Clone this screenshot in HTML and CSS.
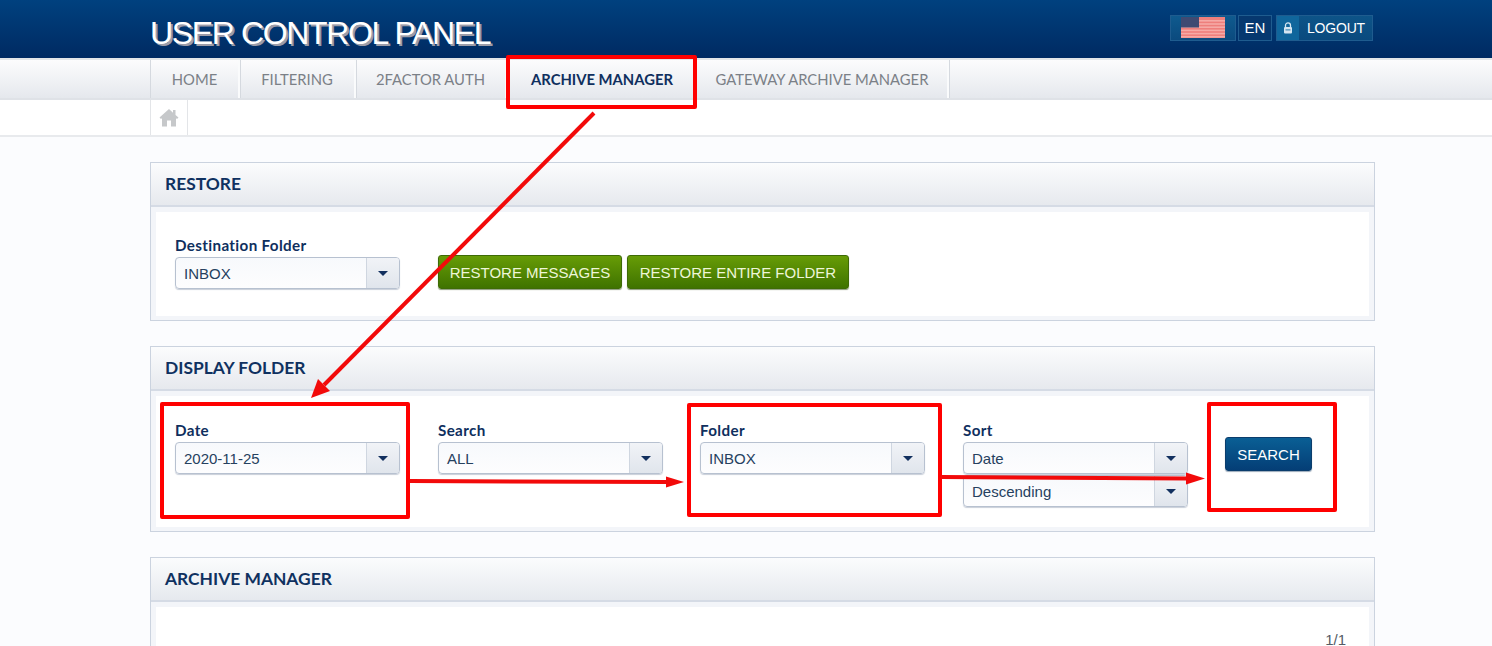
FILE: index.html
```html
<!DOCTYPE html>
<html lang="en">
<head>
<meta charset="utf-8">
<title>User Control Panel</title>
<link rel="stylesheet" href="styles.css">
</head>
<body>
<header class="topbar">
  <div class="wrap topbar-inner">
    <h1 class="brand">USER CONTROL PANEL</h1>
    <div class="tools">
      <div class="tool tool-flag">
        <svg class="flag" width="44" height="21" viewBox="0 0 44 21">
          <rect width="44" height="21" fill="#ee7f7c"/>
          <g fill="#f5aaa6"><rect y="3" width="44" height="1.6"/><rect y="6.2" width="44" height="1.6"/><rect y="9.4" width="44" height="1.6"/><rect y="12.6" width="44" height="1.6"/><rect y="15.8" width="44" height="1.6"/><rect y="19" width="44" height="1.6"/></g>
          <rect width="18" height="10.5" fill="#3f4a72"/>
        </svg>
      </div>
      <div class="tool tool-lang">EN</div>
      <div class="tool tool-logout">
        <span class="lock">
          <svg width="10" height="12" viewBox="0 0 10 12"><path d="M2.5 5V3.4a2.5 2.5 0 0 1 5 0V5" fill="none" stroke="#d5e6f2" stroke-width="1.3"/><rect x="1" y="5" width="8" height="6.5" rx="1" fill="#d5e6f2"/><rect x="2.5" y="7.4" width="5" height="1" fill="#2a7cab"/></svg>
        </span>
        <span class="logout-text">LOGOUT</span>
      </div>
    </div>
  </div>
</header>

<nav class="mainnav">
  <div class="wrap tabs">
    <a class="tab tab-home">HOME</a>
    <a class="tab tab-filter">FILTERING</a>
    <a class="tab tab-auth">2FACTOR AUTH</a>
    <a class="tab tab-archive active">ARCHIVE MANAGER</a>
    <a class="tab tab-gateway">GATEWAY ARCHIVE MANAGER</a>
  </div>
</nav>

<div class="crumbs">
  <div class="wrap">
    <span class="crumb-home">
      <svg width="20" height="19" viewBox="0 0 20 19"><path d="M10 1 0.5 9.6 2 11 3 10.2V18.5H8V12.5H12V18.5H17V10.2L18 11 19.5 9.6 16.5 6.9V2H14V4.7Z" fill="#c6c8ca"/></svg>
    </span>
  </div>
</div>

<main class="wrap content">
  <section class="panel">
    <h2 class="panel-title">RESTORE</h2>
    <div class="panel-outer">
      <div class="panel-body restore-body">
        <div class="field">
          <label class="field-label">Destination Folder</label>
          <div class="select"><span class="select-value">INBOX</span><span class="select-btn"><i class="caret"></i></span></div>
        </div>
        <div class="restore-actions">
          <button class="btn btn-green btn-msg">RESTORE MESSAGES</button>
          <button class="btn btn-green btn-all">RESTORE ENTIRE FOLDER</button>
        </div>
      </div>
    </div>
  </section>

  <section class="panel">
    <h2 class="panel-title">DISPLAY FOLDER</h2>
    <div class="panel-outer">
      <div class="panel-body filter-body">
        <div class="field">
          <label class="field-label">Date</label>
          <div class="select"><span class="select-value">2020-11-25</span><span class="select-btn"><i class="caret"></i></span></div>
        </div>
        <div class="field">
          <label class="field-label">Search</label>
          <div class="select"><span class="select-value">ALL</span><span class="select-btn"><i class="caret"></i></span></div>
        </div>
        <div class="field">
          <label class="field-label">Folder</label>
          <div class="select"><span class="select-value">INBOX</span><span class="select-btn"><i class="caret"></i></span></div>
        </div>
        <div class="field">
          <label class="field-label">Sort</label>
          <div class="select"><span class="select-value">Date</span><span class="select-btn"><i class="caret"></i></span></div>
          <div class="select select-next"><span class="select-value">Descending</span><span class="select-btn"><i class="caret"></i></span></div>
        </div>
        <div class="search-cell"><button class="btn btn-blue">SEARCH</button></div>
      </div>
    </div>
  </section>

  <section class="panel panel-last">
    <h2 class="panel-title">ARCHIVE MANAGER</h2>
    <div class="panel-outer">
      <div class="panel-body list-body"><div class="pager">1/1</div></div>
    </div>
  </section>
</main>

<svg class="annotations" width="1492" height="646" viewBox="0 0 1492 646">
  <g fill="none" stroke="#ff0000" stroke-width="4" stroke-linejoin="round">
    <rect x="508" y="57" width="187" height="50"/>
    <rect x="162" y="404" width="246" height="113"/>
    <rect x="689" y="405" width="251" height="110"/>
    <rect x="1209" y="404" width="126" height="106"/>
  </g>
  <g fill="none" stroke="#f20a0a" stroke-width="4">
    <path d="M594 113 324 385"/>
    <path d="M410 481 668 482"/>
    <path d="M941 477 1188 478.5"/>
  </g>
  <g fill="#f20a0a">
    <path d="M311 398 318 379 330 391Z"/>
    <path d="M684 482 666 476.5V487.5Z"/>
    <path d="M1205 478.5 1186 472.5V484.5Z"/>
  </g>
</svg>
</body>
</html>
```
FILE: styles.css
```css
* { box-sizing: border-box; }
html, body { height: 646px; overflow: hidden; }
body {
  margin: 0;
  position: relative;
  background: #fbfcfe;
  font-family: "Liberation Sans", Arial, sans-serif;
  color: #1d3a63;
}
.wrap { width: 1225px; margin-left: 150px; }

/* Top bar */
.topbar {
  height: 58px;
  background: linear-gradient(#00417f, #002a62);
}
.topbar-inner { display: flex; justify-content: space-between; height: 58px; }
.brand {
  margin: 15px 0 0 0;
  font-size: 32px;
  line-height: 36px;
  font-weight: 400;
  letter-spacing: -1.35px;
  color: #fff;
  text-shadow: 2px 2px 0 #9c9ca8;
}
.tools { display: flex; margin: 15px 2px 0 0; height: 26px; }
.tool {
  height: 26px;
  border: 1px solid #1f5c8f;
  background: linear-gradient(#0d5488, #0a4a7e);
  color: #fff;
  font-size: 14px;
  line-height: 24px;
}
.tool-flag { width: 66px; padding: 1px 0 0 10px; background: linear-gradient(#0f5a8e, #0b4a7e); }
.flag { display: block; filter: blur(.7px); }
.tool-lang { width: 34px; margin-left: 2px; text-align: center; background: #06386f; font-size: 15px; }
.tool-logout { width: 97px; margin-left: 4px; display: flex; }
.lock { width: 22px; background: #10669c; display: flex; align-items: center; justify-content: center; margin-right: 8px; }
.logout-text { letter-spacing: -.2px; }

/* Main navigation */
.mainnav {
  height: 42px;
  margin-top: 0;
  border-top: 2px solid #e3e5e8;
  border-bottom: 2px solid #dfe2e7;
  background: linear-gradient(#fcfcfd, #e5e8ed);
}
.tabs { display: flex; height: 38px; }
.tab {
  display: block;
  height: 38px;
  border-right: 2px solid #fafbfc;
  box-shadow: 1px 0 0 #d5d9df;
  font-family: Lato, sans-serif;
  font-size: 14.8px;
  line-height: 39px;
  text-align: center;
  color: #7b8087;
}
.tab-home { width: 90px; border-left: 1px solid #d5d9df; }
.tab-filter { width: 116px; }
.tab-auth { width: 151px; }
.tab-archive { width: 190px; border-right: 0; box-shadow: none; }
.tab-gateway { width: 252px; }
.tab.active { color: #0f2f5e; font-weight: 700; }

/* Breadcrumb */
.crumbs {
  height: 37px;
  background: #fff;
  border-bottom: 2px solid #e8eaed;
}
.crumb-home {
  display: flex;
  width: 38px;
  height: 35px;
  align-items: center;
  justify-content: center;
  border-left: 1px solid #e3e5e8;
  border-right: 1px solid #e3e5e8;
}

/* Panels */
.content { padding-top: 25px; }
.panel {
  border: 1px solid #cbd3df;
  margin-bottom: 25px;
  background: #f3f5f9;
}
.panel-title {
  margin: 0;
  height: 44px;
  padding-left: 14px;
  border-bottom: 2px solid #d5dbe5;
  background: linear-gradient(#fbfcfd, #e6e9ee);
  font-family: Lato, sans-serif;
  font-size: 17.4px;
  line-height: 41px;
  font-weight: 700;
  color: #0f3160;
}
.panel-outer { padding: 5px 5px 4px; }
.panel-body { background: #fff; }
.restore-body { height: 104px; padding: 25px 0 0 19px; display: flex; }
.restore-actions { display: flex; gap: 5px; margin: 18px 0 0 38px; }
.filter-body {
  height: 131px;
  padding: 26px 0 0 19px;
  display: grid;
  grid-template-columns: 263px 262px 263px 262px auto;
  align-items: start;
}
.list-body { height: 39px; padding: 26px 23px 0 0; }
.pager { text-align: right; font-size: 15px; line-height: 13px; color: #555c66; }

/* Form controls */
.field { width: 225px; }
.field-label {
  display: block;
  height: 20px;
  font-family: Lato, sans-serif;
  font-size: 15.2px;
  letter-spacing: .35px;
  line-height: 17px;
  font-weight: 700;
  color: #0f2f5e;
}
.select {
  display: flex;
  height: 32px;
  border: 1px solid #b7c1d0;
  border-radius: 4px;
  background: linear-gradient(#f7f9fc, #fdfdfe);
  box-shadow: 0 1px 1px #c9cfd9;
  overflow: hidden;
}
.select-next { margin-top: 1px; }
.select-value { flex: 1; padding-left: 8px; font-size: 15px; line-height: 31px; color: #26415f; }
.select-btn {
  width: 33px;
  border-left: 1px solid #cfd6e0;
  background: linear-gradient(#f1f3f7, #e0e5ec);
  display: flex;
  align-items: center;
  justify-content: center;
}
.caret {
  width: 0;
  height: 0;
  border-left: 5px solid transparent;
  border-right: 5px solid transparent;
  border-top: 5px solid #12305f;
}

/* Buttons */
.btn {
  height: 34px;
  padding: 0;
  border-radius: 3px;
  color: #fff;
  font-family: "Liberation Sans", Arial, sans-serif;
  font-size: 15px;
  text-align: center;
}
.btn-green {
  border: 1px solid #3e6b06;
  background: linear-gradient(#679c06, #3f7300);
  color: #eef6d8;
  box-shadow: 0 1px 1px #8b9b7c;
}
.btn-msg { width: 184px; }
.btn-all { width: 222px; }
.btn-blue {
  width: 87px;
  border: 1px solid #0b3d6c;
  background: linear-gradient(#0a5f95, #043e76);
  box-shadow: 0 1px 1px #9aa9ba;
}
.search-cell { padding-top: 15px; }

/* Annotation overlay */
.annotations { position: absolute; left: 0; top: 0; pointer-events: none; }
```
